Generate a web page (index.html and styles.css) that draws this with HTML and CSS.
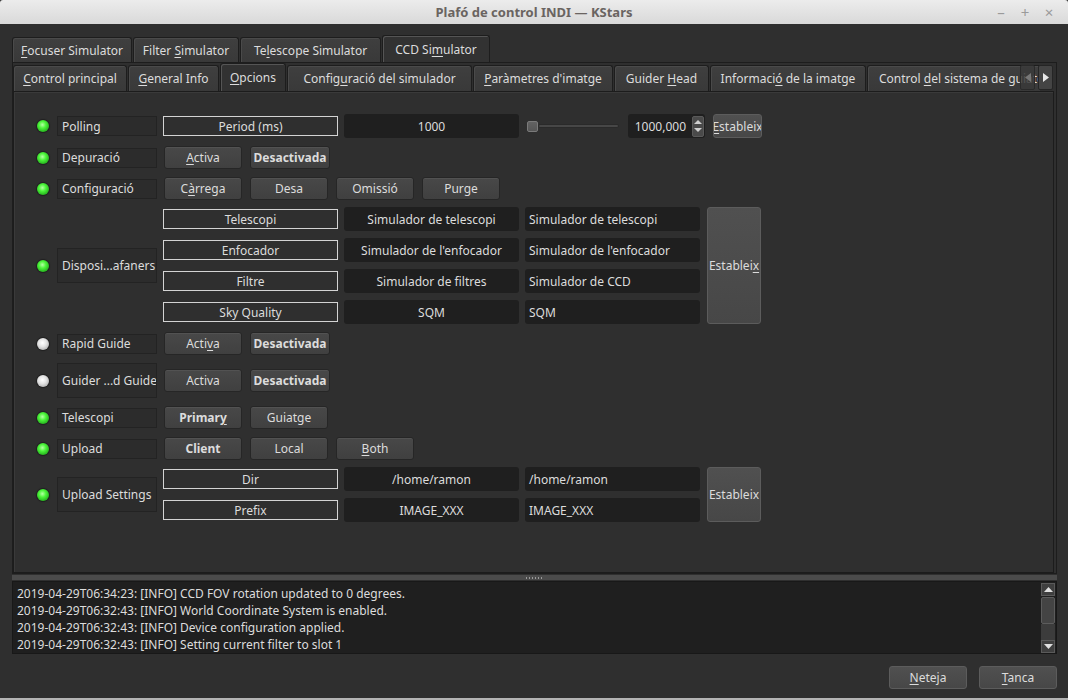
FILE: index.html
```html
<!DOCTYPE html>
<html>
<head>
<meta charset="utf-8">
<link rel="stylesheet" href="styles.css">
</head>
<body>
<div class="window">
  <div class="titlebar">
    <div></div>
    <div class="title">Plafó de control INDI — KStars</div>
    <div class="wctl"><span>–</span><span>+</span><span>×</span></div>
  </div>
  <div class="main">
    <div class="toptabs">
      <div class="tab t-foc"><span><u>F</u>ocuser Simulator</span></div>
      <div class="tab t-fil"><span>Filter <u>S</u>imulator</span></div>
      <div class="tab t-tel"><span>Te<u>l</u>escope Simulator</span></div>
      <div class="tab sel t-ccd"><span>CCD Si<u>m</u>ulator</span></div>
    </div>
    <div class="outer">
      <div class="subtabs">
        <div class="subtabstrip">
          <div class="tab s-main"><span><u>C</u>ontrol principal</span></div>
          <div class="tab s-gen"><span><u>G</u>eneral Info</span></div>
          <div class="tab sel s-opt"><span><u>O</u>pcions</span></div>
          <div class="tab s-cfg"><span>Config<u>u</u>ració del simulador</span></div>
          <div class="tab s-par"><span><u>P</u>aràmetres d'imatge</span></div>
          <div class="tab s-gh"><span>Guider <u>H</u>ead</span></div>
          <div class="tab s-inf"><span>Informaci<u>ó</u> de la imatge</span></div>
          <div class="tab s-last"><span>Control <u>d</u>el sistema de guiatge</span></div>
        </div>
        <div class="scrollarrows">
          <div class="sarrow dim"><svg width="6" height="9" viewBox="0 0 6 9"><path d="M6 0 L0 4.5 L6 9 Z" fill="#777"/></svg></div>
          <div class="sarrow"><svg width="6" height="9" viewBox="0 0 6 9"><path d="M0 0 L6 4.5 L0 9 Z" fill="#e8e8e8"/></svg></div>
        </div>
      </div>
      <div class="panel">
        <div class="prop">
          <span class="led on"></span>
          <div class="plabel">Polling</div>
          <div class="pbody">
            <div class="nbox">Period (ms)</div>
            <div class="field center">1000</div>
            <div class="slider"><span class="handle"></span><span class="groove"></span></div>
            <div class="spin"><span class="spintext">1000,000</span><span class="spinbtns"><svg width="8" height="16" viewBox="0 0 8 16"><path d="M0 6 L4 2 L8 6 Z" fill="#cfcfcf"/><path d="M0 10 L4 14 L8 10 Z" fill="#cfcfcf"/></svg></span></div>
            <div class="btn set small"><span><u>E</u>stableix</span></div>
          </div>
        </div>
        <div class="prop">
          <span class="led on"></span>
          <div class="plabel">Depuració</div>
          <div class="pbody sw">
            <div class="btn"><span><u>A</u>ctiva</span></div>
            <div class="btn bold wide"><span>Desactivada</span></div>
          </div>
        </div>
        <div class="prop">
          <span class="led on"></span>
          <div class="plabel">Configuració</div>
          <div class="pbody sw">
            <div class="btn"><span>C<u>à</u>rrega</span></div>
            <div class="btn"><span>Desa</span></div>
            <div class="btn"><span>Omissió</span></div>
            <div class="btn"><span>Purge</span></div>
          </div>
        </div>
        <div class="prop multi">
          <span class="led on"></span>
          <div class="plabel tall">Disposi...afaners</div>
          <div class="pgrid four">
            <div class="nbox">Telescopi</div>
            <div class="field center">Simulador de telescopi</div>
            <div class="field">Simulador de telescopi</div>
            <div class="btn set tallbtn"><span>Establei<u>x</u></span></div>
            <div class="nbox">Enfocador</div>
            <div class="field center">Simulador de l'enfocador</div>
            <div class="field">Simulador de l'enfocador</div>
            <div class="nbox">Filtre</div>
            <div class="field center">Simulador de filtres</div>
            <div class="field">Simulador de CCD</div>
            <div class="nbox">Sky Quality</div>
            <div class="field center">SQM</div>
            <div class="field">SQM</div>
          </div>
        </div>
        <div class="prop">
          <span class="led off"></span>
          <div class="plabel">Rapid Guide</div>
          <div class="pbody sw">
            <div class="btn"><span>Acti<u>v</u>a</span></div>
            <div class="btn bold wide"><span>Desactivada</span></div>
          </div>
        </div>
        <div class="prop">
          <span class="led off"></span>
          <div class="plabel tall">Guider ...d Guide</div>
          <div class="pbody sw">
            <div class="btn"><span>Activa</span></div>
            <div class="btn bold wide"><span>Desactivada</span></div>
          </div>
        </div>
        <div class="prop">
          <span class="led on"></span>
          <div class="plabel">Telescopi</div>
          <div class="pbody sw">
            <div class="btn bold"><span>Primar<u>y</u></span></div>
            <div class="btn"><span>Guiatge</span></div>
          </div>
        </div>
        <div class="prop">
          <span class="led on"></span>
          <div class="plabel">Upload</div>
          <div class="pbody sw">
            <div class="btn bold"><span>Client</span></div>
            <div class="btn"><span>Local</span></div>
            <div class="btn"><span><u>B</u>oth</span></div>
          </div>
        </div>
        <div class="prop multi">
          <span class="led on"></span>
          <div class="plabel tall">Upload Settings</div>
          <div class="pgrid two">
            <div class="nbox">Dir</div>
            <div class="field center">/home/ramon</div>
            <div class="field">/home/ramon</div>
            <div class="btn set tallbtn"><span>Estableix</span></div>
            <div class="nbox">Prefix</div>
            <div class="field center">IMAGE_XXX</div>
            <div class="field">IMAGE_XXX</div>
          </div>
        </div>
      </div>
    </div>
    <div class="splitter"><span class="grip"></span></div>
    <div class="log">
      <div class="logtext">
        <div>2019-04-29T06:34:23: [INFO] CCD FOV rotation updated to 0 degrees.</div>
        <div>2019-04-29T06:32:43: [INFO] World Coordinate System is enabled.</div>
        <div>2019-04-29T06:32:43: [INFO] Device configuration applied.</div>
        <div>2019-04-29T06:32:43: [INFO] Setting current filter to slot 1</div>
      </div>
      <div class="vscroll">
        <div class="sbtn"><svg width="9" height="5" viewBox="0 0 9 5"><path d="M0 5 L4.5 0 L9 5 Z" fill="#e0e0e0"/></svg></div>
        <div class="shandle"></div>
        <div class="strack"></div>
        <div class="sbtn"><svg width="9" height="5" viewBox="0 0 9 5"><path d="M0 0 L4.5 5 L9 0 Z" fill="#e0e0e0"/></svg></div>
      </div>
    </div>
    <div class="footer">
      <div class="btn set"><span><u>N</u>eteja</span></div>
      <div class="btn set"><span><u>T</u>anca</span></div>
    </div>
  </div>
</div>
</body>
</html>
```

FILE: styles.css
```css
* { box-sizing: border-box; }
html, body { margin: 0; padding: 0; }
body {
  width: 1068px;
  height: 700px;
  overflow: hidden;
  background: #2f2f2f;
  font-family: "Noto Sans", "Open Sans", sans-serif;
  font-size: 12px;
  color: #dcdcdc;
}
u { text-decoration: underline; text-underline-offset: 2px; }
.window {
  height: 700px;
  display: flex;
  flex-direction: column;
  border-bottom: 2px solid #b4b4b4;
}
.titlebar {
  height: 24px;
  flex: none;
  display: grid;
  grid-template-columns: 1fr auto 1fr;
  align-items: center;
  background: linear-gradient(#ececec, #d9d9d9);
  border-radius: 3px 3px 0 0;
}
.title { font-weight: bold; font-size: 13px; color: #6a6461; }
.wctl {
  justify-self: end;
  display: flex;
  padding-right: 7px;
  color: #9a9a9a;
  font-size: 15px;
}
.wctl span { width: 24px; text-align: center; }
.main {
  flex: 1;
  display: flex;
  flex-direction: column;
  padding: 11px 11px 0 12px;
}
.toptabs {
  height: 27px;
  display: flex;
  align-items: flex-end;
}
.tab {
  height: 25px;
  padding: 0 6px;
  display: flex;
  align-items: center;
  justify-content: center;
  white-space: nowrap;
  overflow: hidden;
  background: linear-gradient(#3f3f3f, #393939);
  border: 1px solid #1d1d1d;
  border-bottom: none;
  border-radius: 3px 3px 0 0;
  box-shadow: inset 1px 1px 0 #4a4a4a;
  margin-right: 1px;
  flex: none;
}
.tab.sel {
  height: 27px;
  background: #323232;
  box-shadow: inset 1px 1px 0 #555;
}
.t-foc { width: 120px; }
.t-fil { width: 106px; }
.t-tel { width: 141px; }
.t-ccd { width: 108px; }
.outer {
  height: 512px;
  flex: none;
  border: 1px solid #1d1d1d;
  display: flex;
  flex-direction: column;
}
.subtabs {
  height: 28px;
  flex: none;
  display: flex;
  align-items: flex-end;
  position: relative;
}
.subtabstrip {
  width: 1027px;
  height: 28px;
  display: flex;
  align-items: flex-end;
  overflow: hidden;
}
.subtabs .tab { height: 26px; }
.subtabs .tab.sel { height: 28px; }
.s-main { width: 114px; }
.s-gen { width: 91px; }
.s-opt { width: 66px; }
.s-cfg { width: 185px; }
.s-par { width: 140px; }
.s-gh { width: 95px; }
.s-inf { width: 156px; }
.subtabs .s-last { justify-content: flex-start; padding-left: 11px; }
.scrollarrows {
  position: absolute;
  right: 3px;
  top: 2px;
  display: flex;
  gap: 3px;
}
.sarrow {
  width: 15px;
  height: 25px;
  display: flex;
  align-items: center;
  justify-content: center;
  background: #444;
  border: 1px solid #252525;
  border-radius: 2px;
}
.sarrow.dim { background: rgba(58, 58, 58, 0.85); border-color: #2a2a2a; }
.panel {
  height: 482px;
  margin-right: 2px;
  border: 1px solid #1c1c1c;
  box-shadow: inset 1px 1px 0 #3a3a3a;
  background: #2f2f2f;
  padding: 22px 0 0 23px;
  display: flex;
  flex-direction: column;
  gap: 8px;
}
.prop { display: flex; align-items: center; }
.prop.multi { margin-top: -1px; }
.led {
  width: 12px;
  height: 12px;
  border-radius: 50%;
  margin-right: 8px;
  flex: none;
}
.led.on {
  background: radial-gradient(circle at 45% 40%, #b6ffa6 0%, #4cf43a 35%, #1fa81a 80%, #146f12 100%);
  box-shadow: 0 0 1px 1px rgba(0, 0, 0, 0.35);
}
.led.off {
  background: radial-gradient(circle at 45% 40%, #ffffff 0%, #e3e3e3 40%, #a9a9a9 85%, #7a7a7a 100%);
  box-shadow: 0 0 1px 1px rgba(0, 0, 0, 0.35);
}
.plabel {
  width: 100px;
  height: 20px;
  flex: none;
  margin-right: 6px;
  padding-left: 4px;
  display: flex;
  align-items: center;
  white-space: nowrap;
  overflow: hidden;
  background: #2c2c2c;
  border: 1px solid #232323;
}
.plabel.tall { height: 35px; }
.pbody { display: flex; align-items: center; gap: 6px; }
.pbody.sw { gap: 8px; padding-left: 1px; }
.nbox {
  width: 175px;
  height: 20px;
  border: 1px solid #d4d4d4;
  display: flex;
  align-items: center;
  justify-content: center;
  white-space: nowrap;
}
.field {
  width: 175px;
  height: 24px;
  background: #1f1f1f;
  border-radius: 3px;
  display: flex;
  align-items: center;
  padding-left: 4px;
  white-space: nowrap;
  overflow: hidden;
}
.field.center { justify-content: center; padding-left: 0; }
.slider {
  width: 92px;
  height: 24px;
  margin-left: 2px;
  display: flex;
  align-items: center;
}
.handle {
  width: 11px;
  height: 11px;
  background: linear-gradient(#626262, #565656);
  border: 1px solid #7a7a7a;
  border-radius: 2px;
  flex: none;
}
.groove {
  flex: 1;
  height: 4px;
  background: #474747;
  border: 1px solid #2a2a2a;
  border-radius: 2px;
}
.spin {
  width: 77px;
  height: 24px;
  margin-left: 3px;
  background: #1f1f1f;
  border-radius: 3px;
  display: flex;
  align-items: center;
  justify-content: flex-end;
  padding-right: 1px;
}
.spintext { margin-right: 6px; }
.spinbtns {
  width: 12px;
  height: 21px;
  background: #4a4a4a;
  border: 1px solid #5a5a5a;
  border-radius: 2px;
  display: flex;
  align-items: center;
  justify-content: center;
}
.btn {
  width: 78px;
  height: 23px;
  flex: none;
  display: flex;
  align-items: center;
  justify-content: center;
  white-space: nowrap;
  background: linear-gradient(#484848, #404040);
  border: 1px solid #262626;
  border-radius: 3px;
  box-shadow: inset 0 1px 0 #525252;
}
.btn.wide { width: 80px; }
.btn.bold { font-weight: bold; }
.btn.set {
  background: linear-gradient(#505050, #474747);
  border-color: #5c5c5c;
  box-shadow: none;
}
.btn.small { width: 49px; height: 24px; margin-left: 2px; overflow: hidden; }
.pgrid {
  display: grid;
  grid-template-columns: 175px 175px 175px 54px;
  grid-auto-rows: 24px;
  column-gap: 6px;
  row-gap: 7px;
  align-items: center;
}
.pgrid .tallbtn {
  grid-column: 4;
  width: 54px;
  height: 100%;
  margin-left: 1px;
}
.pgrid.four .tallbtn { grid-row: 1 / 5; }
.pgrid.two .tallbtn { grid-row: 1 / 3; }
.splitter {
  height: 7px;
  flex: none;
  display: flex;
  align-items: center;
  justify-content: center;
  padding-top: 1px;
  background: linear-gradient(#2f2f2f 0, #2f2f2f 1px, #4b4b4b 1px, #4b4b4b 6px, #2f2f2f 6px);
}
.grip {
  width: 18px;
  height: 2px;
  background: repeating-linear-gradient(90deg, #9a9a9a 0 1px, transparent 1px 3px);
}
.log {
  height: 73px;
  flex: none;
  background: #1f1f1f;
  border: 1px solid #181818;
  display: flex;
}
.logtext {
  flex: 1;
  padding: 3px 0 0 4px;
  line-height: 17px;
  overflow: hidden;
  white-space: nowrap;
}
.vscroll {
  width: 14px;
  margin: 1px 1px 0 0;
  display: flex;
  flex-direction: column;
  height: 70px;
}
.sbtn {
  height: 13px;
  background: #3f3f3f;
  border: 1px solid #5a5a5a;
  display: flex;
  align-items: center;
  justify-content: center;
}
.shandle {
  height: 27px;
  background: #444;
  border: 1px solid #5c5c5c;
  border-radius: 2px;
  margin-top: 1px;
}
.strack { flex: 1; background: #3c3c3c; }
.footer {
  display: flex;
  justify-content: flex-end;
  gap: 12px;
  padding-top: 12px;
}
```
